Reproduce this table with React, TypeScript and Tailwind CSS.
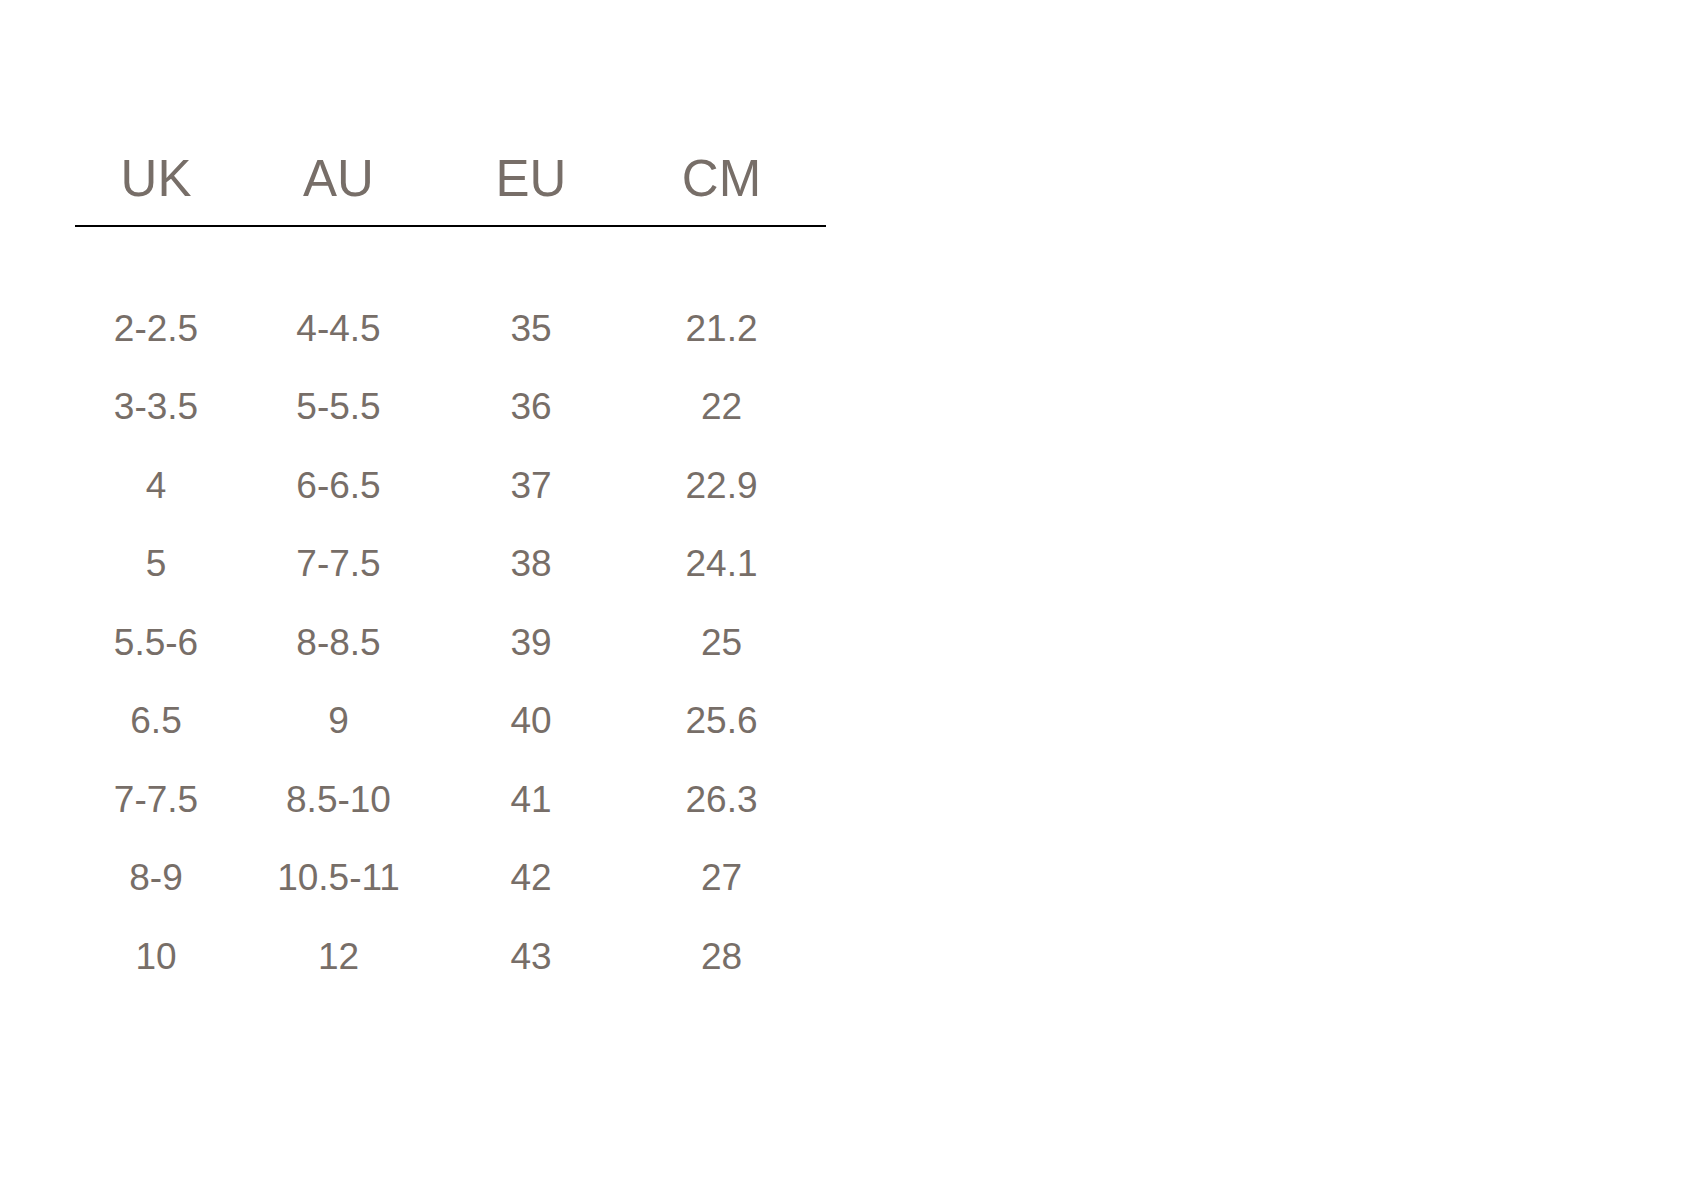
const rows = [
  ["2-2.5", "4-4.5", "35", "21.2"],
  ["3-3.5", "5-5.5", "36", "22"],
  ["4", "6-6.5", "37", "22.9"],
  ["5", "7-7.5", "38", "24.1"],
  ["5.5-6", "8-8.5", "39", "25"],
  ["6.5", "9", "40", "25.6"],
  ["7-7.5", "8.5-10", "41", "26.3"],
  ["8-9", "10.5-11", "42", "27"],
  ["10", "12", "43", "28"],
]

const headers = ["UK", "AU", "EU", "CM"]

export default function App() {
  return (
    <div className="min-h-[1200px] w-full bg-white pl-[75px] pt-[153px] text-[#776e68] font-['Liberation_Sans',Arial,sans-serif]">
      <div className="w-[751px]">
        <div className="grid grid-cols-[162px_203px_182px_199px] border-b-2 border-black pb-[21px]">
          {headers.map((h) => (
            <div key={h} className="text-center text-[51px] leading-[51px]">
              {h}
            </div>
          ))}
        </div>
        <div className="pt-[62px]">
          {rows.map((r, i) => (
            <div key={i} className="grid h-[78.5px] grid-cols-[162px_203px_182px_199px] items-center">
              {r.map((c, j) => (
                <div key={j} className="text-center text-[37px] leading-[41px]">
                  {c}
                </div>
              ))}
            </div>
          ))}
        </div>
      </div>
    </div>
  )
}
